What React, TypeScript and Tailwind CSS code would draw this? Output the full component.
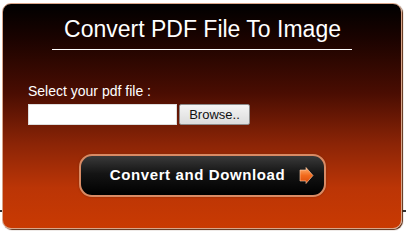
import React from "react";

export default function App() {
  return (
    <div className="relative w-[406px] h-[231px] bg-white overflow-hidden" style={{ fontFamily: '"Liberation Sans", Arial, sans-serif' }}>
      <div className="absolute left-0 right-0 top-[210px] h-[2px] bg-[#333]" />
      <div className="relative ml-[2px] mt-[3px] w-[400px] h-[226px] rounded-[9px] border border-[#d9a589] shadow-[1px_1px_1px_#5a2a10] bg-[linear-gradient(to_bottom,#000000_0%,#1a0300_15%,#4a0d02_40%,#8a2406_62%,#bb3506_82%,#c93a02_100%)] flex flex-col items-center">
        <div className="mt-[11px] text-white text-[23px] leading-[28px] pl-[1px]">Convert PDF File To Image</div>
        <div className="mt-[6px] w-[300px] h-px bg-white" />
        <div className="self-start ml-[25px] mt-[33px] text-white text-[14px] leading-[16px]">Select your pdf file :</div>
        <div className="self-start ml-[25px] mt-[5px] flex items-center gap-[2px]">
          <div className="w-[149px] h-[21px] bg-white border border-[#ddd]" />
          <div className="w-[71px] h-[21px] rounded-[2px] border border-[#8c8c8c] bg-[linear-gradient(to_bottom,#f4f4f4,#dcdcdc)] text-[#111] text-[13px] leading-[19px] text-center">Browse..</div>
        </div>
        <div className="mt-[29px] w-[247px] h-[43px] rounded-[13px] border-2 border-[#d98a64] bg-[linear-gradient(to_bottom,#3a3a3a,#141414_45%,#000000)] shadow-[0_0_2px_#7a2a0a] flex items-center justify-center gap-[14px] pl-[20px]">
          <span className="text-white font-bold text-[15px] tracking-[0.6px]">Convert and Download</span>
          <svg width="15" height="17" viewBox="0 0 15 17">
            <defs>
              <linearGradient id="ar" x1="0" y1="0" x2="0" y2="1">
                <stop offset="0" stopColor="#ffb070" />
                <stop offset="0.5" stopColor="#f26a1c" />
                <stop offset="1" stopColor="#d94a0a" />
              </linearGradient>
            </defs>
            <path d="M1 3 H7 V0.5 L14 8.5 L7 16.5 V14 H1 Z" fill="url(#ar)" stroke="#ffd0b0" strokeWidth="0.6" />
          </svg>
        </div>
      </div>
    </div>
  );
}
